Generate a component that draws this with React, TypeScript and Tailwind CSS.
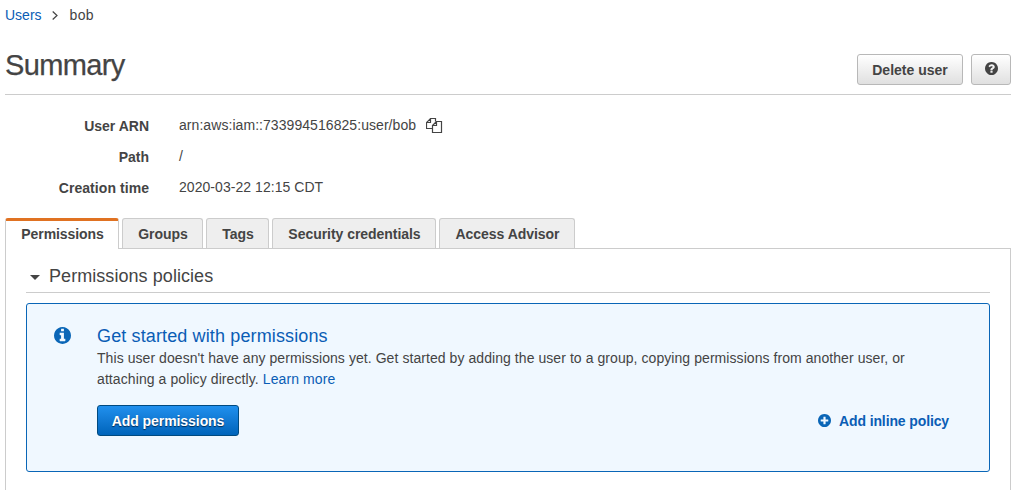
const DISC =
  "M1664 896q0 209-103 385.5t-279.5 279.5-385.5 103-385.5-103-279.5-279.5-103-385.5 103-385.5 279.5-279.5 385.5-103 385.5 103 279.5 279.5 103 385.5z";

const MARKS = {
  info: "M1152 1376v-160q0-14-9-23t-23-9h-96v-512q0-14-9-23t-23-9h-320q-14 0-23 9t-9 23v160q0 14 9 23t23 9h96v320h-96q-14 0-23 9t-9 23v160q0 14 9 23t23 9h448q14 0 23-9t9-23zm-128-896v-160q0-14-9-23t-23-9h-192q-14 0-23 9t-9 23v160q0 14 9 23t23 9h192q14 0 23-9t9-23z",
  plus: "M1344 960v-128q0-26-19-45t-45-19h-256v-256q0-26-19-45t-45-19h-128q-26 0-45 19t-19 45v256h-256q-26 0-45 19t-19 45v128q0 26 19 45t45 19h256v256q0 26 19 45t45 19h128q26 0 45-19t19-45v-256h256q26 0 45-19t19-45z",
  question:
    "M1024 1376v-192q0-14-9-23t-23-9h-192q-14 0-23 9t-9 23v192q0 14 9 23t23 9h192q14 0 23-9t9-23zm256-672q0-88-55.5-163t-138.5-116-170-41q-243 0-371 213-15 24 8 42l132 100q7 6 19 6 16 0 25-12 53-68 86-92 34-24 86-24 48 0 85.5 26t37.5 59q0 38-20 61t-68 45q-63 28-115.5 86.5t-52.5 125.5v36q0 14 9 23t23 9h192q14 0 23-9t9-23q0-19 21.5-49.5t54.5-49.5q32-18 49-28.5t46-35 44.5-48 28-60.5 12.5-81z",
};

function CircleIcon({ mark, className }: { mark: keyof typeof MARKS; className: string }) {
  return (
    <svg viewBox="128 128 1536 1536" className={className} fill="currentColor" fillRule="evenodd" aria-hidden="true">
      <path d={`${DISC}${MARKS[mark]}`} />
    </svg>
  );
}

function CopyIcon() {
  return (
    <svg viewBox="0 0 17 17" className="mt-px ml-[10px] size-[17px]" fill="none" stroke="currentColor" strokeWidth="1.2" aria-hidden="true">
      <path d="M6.5 11.5h-6v-6l4-4h5v3M4.5 1.5v4h-4" />
      <path d="M10.5 4.5h5v11h-9v-7h4zl-4 4" />
    </svg>
  );
}

const tabs = [
  { label: "Groups", width: "w-[81px]" },
  { label: "Tags", width: "w-[63px]" },
  { label: "Security credentials", width: "w-[164px]" },
  { label: "Access Advisor", width: "w-[136px]" },
];

export default function App() {
  return (
    <div className="flex h-[490px] w-[1018px] flex-col overflow-hidden bg-white pr-[7px] pl-[5px] font-['Liberation_Sans',Arial,sans-serif] text-[14px] text-[#444]">
      <nav className="flex h-[30px] items-center">
        <a className="text-[#0a5db5]">Users</a>
        <svg viewBox="0 0 6 9" className="ml-[10px] h-[9px] w-[6px]" fill="none" stroke="currentColor" strokeWidth="1.2">
          <path d="M.7.5 5 4.5.7 8.5" />
        </svg>
        <span className="ml-[12px] tracking-[0.3px]">bob</span>
      </nav>

      <header className="flex h-[65px] items-start justify-between border-b border-[#ccc]">
        <h1 className="mt-[17px] text-[29px] leading-[36px] tracking-[-0.65px] [-webkit-text-stroke:0.25px_#444]">Summary</h1>
        <div className="mt-6 flex gap-2">
          <button className="h-[31px] w-[106px] rounded-[3px] border border-[#b8b8b8] bg-linear-to-b from-white to-[#e0e0e0] pt-[2px] font-bold">
            Delete user
          </button>
          <button className="flex h-[31px] w-10 items-center justify-center rounded-[3px] border border-[#b8b8b8] bg-linear-to-b from-white to-[#e0e0e0]">
            <CircleIcon mark="question" className="-mt-[2px] size-[13px]" />
          </button>
        </div>
      </header>

      <dl className="grid h-[123px] grid-cols-[144px_1fr] auto-rows-[31px] gap-x-[30px] pt-[15px] leading-[32px]">
        <dt className="text-right font-bold">User ARN</dt>
        <dd className="-mt-px flex items-center tracking-[0.06px]">arn:aws:iam::733994516825:user/bob<CopyIcon /></dd>
        <dt className="text-right font-bold">Path</dt>
        <dd className="-mt-px">/</dd>
        <dt className="text-right font-bold tracking-[0.06px]">Creation time</dt>
        <dd className="-mt-px tracking-[0.05px]">2020-03-22 12:15 CDT</dd>
      </dl>

      <div className="flex h-[31px] shrink-0 gap-[3px] font-bold">
        <button className="z-10 h-[31px] w-[114px] rounded-t-[3px] border-x border-t-[3px] border-x-[#ccc] border-t-[#e07222] bg-white pb-px pl-px tracking-[-0.08px]">
          Permissions
        </button>
        {tabs.map((tab) => (
          <button key={tab.label} className={`h-[30px] rounded-t-[3px] border border-b-0 border-[#ccc] bg-[#eee] pt-[2px] pl-px tracking-[-0.04px] ${tab.width}`}>
            {tab.label}
          </button>
        ))}
      </div>

      <main className="-mt-px flex-1 border border-b-0 border-[#ccc] px-5">
        <h2 className="flex h-[44px] items-center border-b border-[#ccc] pt-[12px] text-[18px] tracking-[0.06px]">
          <svg viewBox="0 0 10 5" className="mt-[2px] mr-[9px] ml-[4px] h-[5px] w-[10px]" fill="currentColor">
            <path d="M0 0h10L5 5z" />
          </svg>
          Permissions policies
        </h2>
        <section className="mt-[10px] flex h-[169px] rounded-[3px] border border-[#0a66b7] bg-[#f0f8ff] pt-[21px] pr-10 pl-[27px]">
          <CircleIcon mark="info" className="mt-[2px] size-[17px] text-[#0a66b7]" />
          <div className="ml-[26px] flex-1">
            <h3 className="text-[18px] leading-[22px] tracking-[0.13px] text-[#0a5db5]">Get started with permissions</h3>
            <p className="mt-px leading-[21px] tracking-[0.065px] whitespace-nowrap">
              This user doesn't have any permissions yet. Get started by adding the user to a group, copying permissions from another user, or
              <br />
              <span className="tracking-[0.09px]">attaching a policy directly. <a className="text-[#0a5db5]">Learn more</a></span>
            </p>
            <div className="mt-[15px] flex items-center justify-between font-bold">
              <button className="h-[31px] w-[142px] rounded-[3px] border border-[#004a80] bg-linear-to-b from-[#2090ee] to-[#0064ba] pt-[2px] tracking-[-0.06px] text-white text-shadow-[0_1px_1px_#002b55]">
                Add permissions
              </button>
              <a className="flex items-center pt-[2px] tracking-[-0.12px] text-[#0a5db5]">
                <CircleIcon mark="plus" className="mr-2 -mt-[3px] size-[13px] text-[#0a66b7]" />
                Add inline policy
              </a>
            </div>
          </div>
        </section>
      </main>
    </div>
  );
}
